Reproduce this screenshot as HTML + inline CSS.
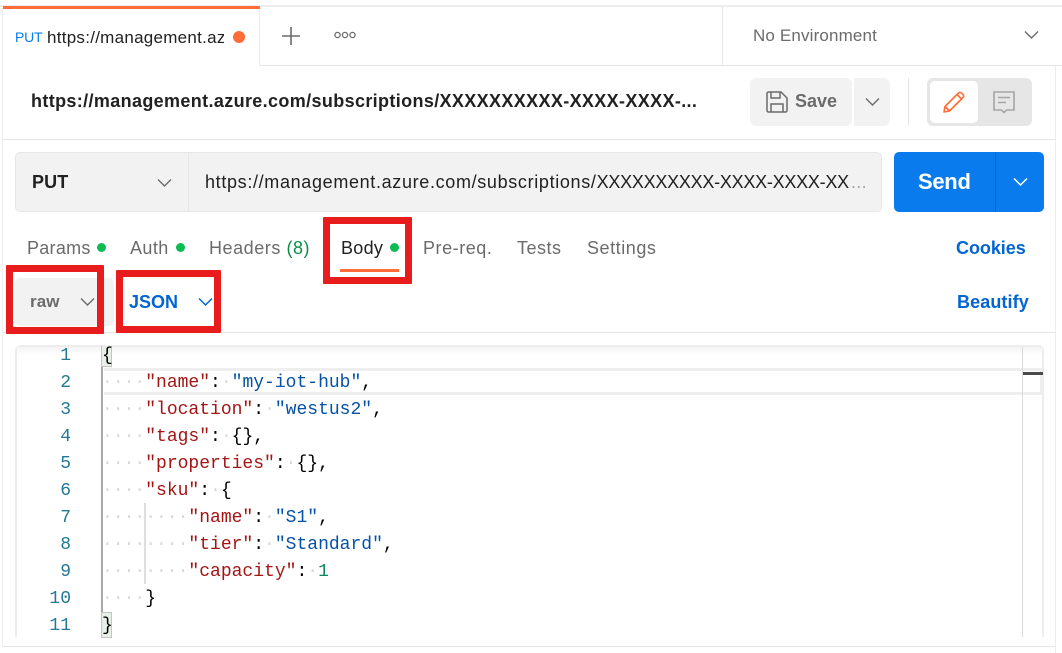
<!DOCTYPE html>
<html><head><meta charset="utf-8"><style>
html,body{margin:0;padding:0;background:#fff}
#p{position:relative;width:1062px;height:653px;overflow:hidden;background:#fff;font-family:"Liberation Sans",sans-serif}
#p div,#p svg{position:absolute}
.t{white-space:nowrap;line-height:24px;height:24px}
.h{font-size:18px;color:#6b6b6b;letter-spacing:.45px;top:236px}
.c{font-family:"Liberation Mono",monospace;font-size:18px;line-height:27px;height:27px;white-space:pre;left:102px;color:#000}
.n{font-family:"Liberation Mono",monospace;font-size:18px;line-height:27px;height:27px;color:#237893;width:60px;text-align:right;left:11px}
.c i{font-style:normal;color:#d8d8d8}.c b{font-weight:normal;color:#a31515}.c u{text-decoration:none;color:#0451a5}.c s{text-decoration:none;color:#098658}
.dot{border-radius:50%;background:#0cbb52;width:9px;height:9px}
.r{border:7px solid #e81c1c;box-sizing:border-box;border-radius:1px}
</style></head><body><div id="p">
<div style="left:0;top:5px;width:1062px;height:2px;background:#ededed"></div>
<div style="left:2px;top:7px;width:1px;height:640px;background:#ededed"></div>
<div style="left:1055px;top:66px;width:1px;height:587px;background:#ededed"></div>
<div style="left:3px;top:6px;width:257px;height:3px;background:#ff6c37"></div>
<div style="left:259px;top:9px;width:1px;height:57px;background:#ededed"></div>
<div style="left:260px;top:65px;width:802px;height:1px;background:#e6e6e6"></div>
<div style="left:722px;top:7px;width:1px;height:59px;background:#e6e6e6"></div>
<div class="t" style="left:15px;top:25px;font-size:14px;color:#097bed;letter-spacing:-.2px">PUT</div>
<div class="t" style="left:47px;top:26px;width:177px;overflow:hidden;font-size:17px;color:#212121;letter-spacing:.27px">https://management.azure.com</div>
<div style="left:233px;top:31px;width:12px;height:12px;border-radius:50%;background:#ff6c37"></div>
<svg style="left:281px;top:26px" width="20" height="20"><path d="M10 1v18M1 10h18" stroke="#6b6b6b" stroke-width="1.6" fill="none"/></svg>
<svg style="left:333px;top:29px" width="24" height="12" fill="none" stroke="#6b6b6b" stroke-width="1.3"><circle cx="4.5" cy="6" r="2.6"/><circle cx="12" cy="6" r="2.6"/><circle cx="19.500" cy="6" r="2.6"/></svg>
<div class="t" style="left:753px;top:24px;font-size:17px;color:#6b6b6b;letter-spacing:.15px">No Environment</div>
<svg style="left:1024px;top:29px" width="15" height="12"><path d="M1 2.500l6.500 6.500 6.500-6.500" stroke="#6b6b6b" stroke-width="1.4" fill="none"/></svg>

<div class="t" style="left:31px;top:89px;font-size:18px;font-weight:bold;color:#212121;letter-spacing:.36px">https://management.azure.com/subscriptions/XXXXXXXXXX-XXXX-XXXX-...</div>
<div style="left:750px;top:78px;width:102px;height:48px;background:#f2f2f2;border-radius:6px"></div>
<div style="left:854px;top:78px;width:36px;height:48px;background:#f2f2f2;border-radius:0 6px 6px 0"></div>
<svg style="left:766px;top:91px" width="22" height="22" fill="none" stroke="#6b6b6b" stroke-width="1.500"><path d="M1 2.500A1.500 1.500 0 0 1 2.500 1H15l6 6v12.500a1.500 1.500 0 0 1-1.500 1.500H2.500A1.500 1.500 0 0 1 1 19.500z"/><path d="M5 1v6h9V1M5 21v-8h12v8"/></svg>
<div class="t" style="left:795px;top:89px;font-size:18px;font-weight:bold;color:#6b6b6b;letter-spacing:0">Save</div>
<svg style="left:865px;top:96px" width="15" height="12"><path d="M1 2.500l6.500 6.500 6.500-6.500" stroke="#6b6b6b" stroke-width="1.4" fill="none"/></svg>
<div style="left:908px;top:78px;width:1px;height:48px;background:#e6e6e6"></div>
<div style="left:927px;top:78px;width:105px;height:48px;background:#e6e6e6;border-radius:6px"></div>
<div style="left:930px;top:81px;width:48px;height:42px;background:#fff;border-radius:5px"></div>
<svg style="left:942px;top:90px" width="24" height="24" fill="none" stroke="#ff6c37" stroke-width="1.600" stroke-linejoin="round"><path d="M2 22l1-5.500L16.500 3a2.100 2.100 0 0 1 3 0l1.500 1.500a2.100 2.100 0 0 1 0 3L7.500 21z"/><path d="M15 4.500l5 5M3 16.500l4.500 4.500"/></svg>
<svg style="left:992px;top:90px" width="24" height="24" fill="none" stroke="#a6a6a6" stroke-width="1.600"><path d="M2 2h20v18h-7.500L12 22.500 9.500 20H2z"/><path d="M6 7.500h12M6 12.500h8"/></svg>
<div style="left:3px;top:139px;width:1052px;height:1px;background:#e6e6e6"></div>

<div style="left:15px;top:152px;width:867px;height:60px;box-sizing:border-box;background:#f2f2f2;border:1px solid #e6e6e6;border-radius:5px"></div>
<div style="left:188px;top:153px;width:1px;height:58px;background:#e6e6e6"></div>
<div class="t" style="left:32px;top:170px;font-size:18px;font-weight:bold;color:#212121;letter-spacing:.1px">PUT</div>
<svg style="left:157px;top:177px" width="15" height="12"><path d="M1 2.500l6.500 6.500 6.500-6.500" stroke="#6b6b6b" stroke-width="1.4" fill="none"/></svg>
<div class="t" style="left:205px;top:170px;font-size:18px;color:#212121;letter-spacing:.66px">https://management.azure.com/subscriptions/<span style="letter-spacing:-.25px">XXXXXXXXXX-XXXX-XXXX-XX</span></div>
<div class="t" style="left:851px;top:170px;font-size:18px;color:#a6a6a6;letter-spacing:.3px">...</div>
<div style="left:894px;top:152px;width:150px;height:60px;background:#097bed;border-radius:5px"></div>
<div style="left:995px;top:152px;width:1px;height:60px;background:#0265d2"></div>
<div class="t" style="left:918px;top:170px;font-size:22px;font-weight:bold;color:#fff;letter-spacing:-.3px">Send</div>
<svg style="left:1013px;top:176px" width="15" height="12"><path d="M1 2.500l6.500 6.500 6.500-6.500" stroke="#fff" stroke-width="1.500" fill="none"/></svg>

<div class="t h" style="left:27px;letter-spacing:.27px">Params</div>
<div class="dot" style="left:97px;top:243px"></div>
<div class="t h" style="left:130px;letter-spacing:.4px">Auth</div>
<div class="dot" style="left:176px;top:243px"></div>
<div class="t h" style="left:209px;letter-spacing:.55px">Headers <span style="color:#0a8f47">(8)</span></div>
<div class="t h" style="left:341px;color:#212121;letter-spacing:.3px">Body</div>
<div class="dot" style="left:390px;top:243px"></div>
<div style="left:340px;top:269px;width:59px;height:3px;background:#ff6c37"></div>
<div class="t h" style="left:423px;letter-spacing:.55px">Pre-req.</div>
<div class="t h" style="left:517px;letter-spacing:.5px">Tests</div>
<div class="t h" style="left:587px;letter-spacing:.55px">Settings</div>
<div class="t" style="left:956px;top:236px;font-size:18px;font-weight:bold;color:#0265d2;letter-spacing:-.05px">Cookies</div>

<div style="left:15px;top:278px;width:99px;height:48px;background:#f2f2f2;border-radius:5px"></div>
<div class="t" style="left:30px;top:290px;font-size:17px;font-weight:bold;color:#6b6b6b;letter-spacing:.1px">raw</div>
<svg style="left:80px;top:296px" width="15" height="12"><path d="M1 2.500l6.500 6.500 6.500-6.500" stroke="#6b6b6b" stroke-width="1.4" fill="none"/></svg>
<div class="t" style="left:129px;top:290px;font-size:18px;font-weight:bold;color:#0265d2;letter-spacing:0">JSON</div>
<svg style="left:198px;top:296px" width="15" height="12"><path d="M1 2.500l6.500 6.500 6.500-6.500" stroke="#0265d2" stroke-width="1.500" fill="none"/></svg>
<div class="t" style="left:957px;top:290px;font-size:18px;font-weight:bold;color:#0265d2;letter-spacing:.1px">Beautify</div>
<div style="left:3px;top:332px;width:1052px;height:1px;background:#e6e6e6"></div>

<div style="left:15px;top:345px;width:1029px;height:292px;box-sizing:border-box;border:2px solid #ededed;border-bottom:0;border-radius:6px 6px 0 0"></div>
<div style="left:17px;top:347px;width:1025px;height:8px;background:linear-gradient(#f3f3f3,#fff)"></div>
<div style="left:104px;top:368px;width:939px;height:27px;box-sizing:border-box;border:3px solid #eee;border-left:0"></div>
<div style="left:1022px;top:347px;width:1px;height:290px;background:#d9d9d9"></div>
<div style="left:1023px;top:372px;width:20px;height:3px;background:#4a4a4a"></div>
<div style="left:101px;top:347px;width:2px;height:278px;background:#a8a8a8"></div>
<div style="left:144px;top:503px;width:2px;height:81px;background:#dedede"></div>
<div style="left:101px;top:346px;width:11px;height:21px;box-sizing:border-box;background:#e8efe8;border:1px solid #c4c4c4;border-top:0"></div>
<div style="left:101px;top:612px;width:11px;height:26px;box-sizing:border-box;background:#e8efe8;border:1px solid #c4c4c4"></div>

<div class="n" style="top:343px">1</div><div class="n" style="top:370px">2</div><div class="n" style="top:397px">3</div><div class="n" style="top:424px">4</div><div class="n" style="top:451px">5</div><div class="n" style="top:478px">6</div><div class="n" style="top:505px">7</div><div class="n" style="top:532px">8</div><div class="n" style="top:559px">9</div><div class="n" style="top:586px">10</div><div class="n" style="top:613px">11</div>

<div class="c" style="top:343px">{</div>
<div class="c" style="top:370px"><i>····</i><b>"name"</b>:<i>·</i><u>"my-iot-hub"</u>,</div>
<div class="c" style="top:397px"><i>····</i><b>"location"</b>:<i>·</i><u>"westus2"</u>,</div>
<div class="c" style="top:424px"><i>····</i><b>"tags"</b>:<i>·</i>{},</div>
<div class="c" style="top:451px"><i>····</i><b>"properties"</b>:<i>·</i>{},</div>
<div class="c" style="top:478px"><i>····</i><b>"sku"</b>:<i>·</i>{</div>
<div class="c" style="top:505px"><i>········</i><b>"name"</b>:<i>·</i><u>"S1"</u>,</div>
<div class="c" style="top:532px"><i>········</i><b>"tier"</b>:<i>·</i><u>"Standard"</u>,</div>
<div class="c" style="top:559px"><i>········</i><b>"capacity"</b>:<i>·</i><s>1</s></div>
<div class="c" style="top:586px"><i>····</i>}</div>
<div class="c" style="top:613px">}</div>

<div style="left:3px;top:646px;width:1052px;height:1px;background:#e6e6e6"></div>

<div class="r" style="left:323px;top:217px;width:89px;height:67px"></div>
<div class="r" style="left:6px;top:265px;width:98px;height:69px"></div>
<div class="r" style="left:116px;top:270px;width:105px;height:63px"></div>
</div></body></html>
